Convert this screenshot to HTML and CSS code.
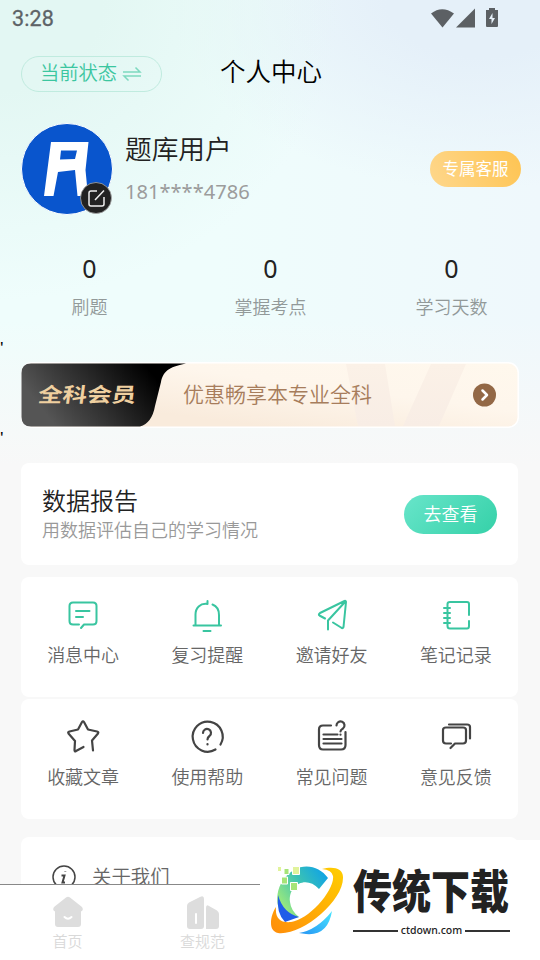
FILE: index.html
```html
<!DOCTYPE html>
<html lang="zh-CN">
<head>
<meta charset="utf-8">
<title>个人中心</title>
<link rel="stylesheet" href="styles.css">
</head>
<body>
<div class="screen">
  <div class="status">
    <span class="clock">3:28</span>
    <svg class="signals" width="70" height="22" viewBox="0 0 70 22">
      <path d="M1 5.500Q12-3 24 5.500L12.500 19.500Z"/><path d="M26 19.500L45 .5V19.500Z"/>
      <path d="M56 2h3V0h6v2h3v16q0 1-1 1H57q-1 0-1-1z"/><path class="bolt" d="M62.500 5v5H65l-3.500 6v-5H59z"/>
    </svg>
  </div>
  <header class="header">
    <button class="switch"><span>当前状态</span>
      <svg width="20" height="16" viewBox="0 0 20 16"><path d="M1 6h17l-4.500-4.500M19 10H2l4.500 4.500"/></svg>
    </button>
    <h1>个人中心</h1>
  </header>
  <section class="profile">
    <div class="avatar">
      <svg width="92" height="92" viewBox="0 0 92 92">
        <circle cx="46" cy="46" r="45.500" fill="#0955cd" stroke="#fff"/>
        <path fill="#fff" fill-rule="evenodd" d="M30 19H67.500L64.500 47 67 73H56.500L54 47 37 49 32.500 73H23ZM40 27.500 39 36.500 54 36 56 27.500Z"/>
      </svg>
      <svg class="edit" width="32" height="32" viewBox="0 0 32 32"><circle cx="16" cy="16" r="15.500"/><path d="M17 9H11q-2 0-2 2v11q0 2 2 2h11q2 0 2-2V15M15 18l9-9.500"/></svg>
    </div>
    <div class="who"><div class="name">题库用户</div><div class="phone">181****4786</div></div>
    <button class="service">专属客服</button>
  </section>
  <section class="stats">
    <div><b>0</b><span>刷题</span></div>
    <div><b>0</b><span>掌握考点</span></div>
    <div><b>0</b><span>学习天数</span></div>
  </section>
  <div class="quote">'</div>
  <section class="vip">
    <svg class="vip-bg" width="498" height="66" viewBox="0 0 498 66">
      <defs>
        <linearGradient id="dark" x1="0" y1=".6" x2="1" y2=".3"><stop offset=".08" stop-color="#555"/><stop offset=".85" stop-color="#000"/></linearGradient>
        <linearGradient id="cream" x1="0" y1="1" x2="1" y2="0"><stop offset=".25" stop-color="#f9ebdc"/><stop offset=".62" stop-color="#fef6ec"/><stop offset="1" stop-color="#fff8ed"/></linearGradient>
        <linearGradient id="band" x1="0" y1="0" x2="0" y2="1"><stop offset="0" stop-color="#fbf1e7"/><stop offset="1" stop-color="#f8ede5"/></linearGradient>
      </defs>
      <rect x=".75" y=".75" width="496.500" height="64.500" rx="10" fill="url(#cream)" stroke="#fff" stroke-width="1.500"/>
      <path d="M325 2H364L374 64H337ZM410 2H445L418 64H382Z" fill="url(#band)"/>
      <path d="M10 1.500H165C147 5 142 10 140 20L134 44Q131 61 119 64.500H10Q.5 64.500.5 55V11Q.5 1.500 10 1.500Z" fill="url(#dark)"/>
      <circle cx="463.500" cy="33" r="11.500" fill="#936846"/><path d="M461.500 28.500l4.500 4.500-4.500 4.500" fill="none" stroke="#fff" stroke-width="2.500" stroke-linecap="round" stroke-linejoin="round"/>
    </svg>
    <strong>全科会员</strong><span>优惠畅享本专业全科</span>
  </section>
  <div class="quote second">'</div>
  <section class="card report">
    <div><h2>数据报告</h2><p>用数据评估自己的学习情况</p></div>
    <button>去查看</button>
  </section>
  <section class="card grid green">
    <div><svg viewBox="0 0 36 36"><path d="M14 29.500H8q-3.500 0-3.500-3.500V11Q4.500 7.500 8 7.500H28q3.500 0 3.500 3.500V26q0 3.500-3.500 3.500H19l-3 3.500M11 16H24.500M11 22H18"/></svg><span>消息中心</span></div>
    <div><svg viewBox="0 0 36 36"><path d="M18.500 6V9C11 8 6.500 13 6.500 19.500V30M23.500 9.500Q30 12 30 20V30M4.500 30.500H32M14.500 36H21.500"/></svg><span>复习提醒</span></div>
    <div><svg viewBox="0 0 36 36"><path d="M11 23.500 5.500 20.500Q4 19.500 6 18L30.500 6Q32 5.500 32 7L29.500 32Q29 34 27 32.500L19 27.500M31 7 14 25.500V34.500"/></svg><span>邀请好友</span></div>
    <div><svg viewBox="0 0 36 36"><path d="M31 20V9Q31 7 29 7H12Q9.500 7 9.500 9V31Q9.500 33.500 12 33.500H29Q31 33.500 31 31V26M6 13h6M6 18h6M6 23h6M6 28h6"/></svg><span>笔记记录</span></div>
  </section>
  <section class="card grid dark">
    <div><svg viewBox="0 0 36 36"><path d="M18.500 29 11 33Q9.500 34 9.500 32L10 23 3.500 15.500Q2.500 14 4.500 13.500L13 11.500 17 4Q18 2.500 19 4L23 11.500 32 13.500Q34 14 33 15.500L27 22.500 28 32.500"/></svg><span>收藏文章</span></div>
    <div><svg viewBox="0 0 36 36"><path d="M26.500 31.500A15 15 0 1 1 31.500 26.500"/><path d="M14 15A4 4 0 1 1 20.500 18Q18.500 19.500 18.500 21.500M18.500 26v.4"/></svg><span>使用帮助</span></div>
    <div><svg viewBox="0 0 36 36"><path d="M17 7.500H9Q5 7.500 5 11.500V27Q5 31.500 9 31.500H27Q31.500 31.500 31.500 27V14M9.500 16.500H23.500M9.500 21H27.500M9.500 25.500H27.500M22.500 7.500A4 4 0 1 1 29 10.500Q26.500 12 26.500 13.500M26.500 16.500v.2"/></svg><span>常见问题</span></div>
    <div><svg viewBox="0 0 36 36"><path d="M13 25.500H8Q5 25.500 5 22.500V12Q5 9.500 8 9.500H25Q28 9.500 28 12V22.500Q28 25.500 25 25.500H17l-4.500 4.500M11 6.500H29Q32 6.500 32 9V20.500"/></svg><span>意见反馈</span></div>
  </section>
  <section class="card about">
    <svg width="26" height="26" viewBox="0 0 26 26"><circle cx="13" cy="13" r="11"/><path d="M10.500 11.500h3l-2 7h2.500M14.300 7.500v.4"/></svg>
    <span>关于我们</span>
  </section>
  <nav class="tabs">
    <div><svg width="34" height="34" viewBox="0 0 34 34"><path d="M15 2.500Q17 1 19 2.500L31 12Q33 15 30 16.500V29Q30 32 27 32H7Q4 32 4 29V16.500Q1 15 3 12Z"/><path class="cut" d="M13.500 22q3.500 3.500 7 0"/></svg><span>首页</span></div>
    <div><svg width="34" height="34" viewBox="0 0 34 34"><path d="M1 11Q1 8.500 3 7.500L14 2Q18 0 18 4V31Q18 34 15 34H4Q1 34 1 31ZM20 13Q20 9 23 11L31 15.500Q33 17 33 19V31Q33 34 30 34H20Z"/><path class="cut" d="M10 19v9"/></svg><span>查规范</span></div>
  </nav>
  <aside class="brand">
    <svg width="80" height="76" viewBox="0 0 80 76">
      <defs>
        <linearGradient id="arc" x1="0" y1=".7" x2="1" y2="0"><stop offset="0" stop-color="#a4ed77"/><stop offset=".5" stop-color="#3bc2b4"/><stop offset="1" stop-color="#079df0"/></linearGradient>
        <linearGradient id="ring" x1="0" y1="1" x2="1" y2="0"><stop offset="0" stop-color="#ff8d0a"/><stop offset="1" stop-color="#ffce00"/></linearGradient>
        <linearGradient id="blue" x1="0" y1="1" x2="1" y2="0"><stop offset="0" stop-color="#2594f4"/><stop offset="1" stop-color="#49e5ff"/></linearGradient>
      </defs>
      <path fill="url(#arc)" d="M18 57C4 43 7 18 26 7 38 0 52 4 60 15L51 26C38 12 20 22 22 39Q23 48 31 54Z"/>
      <path fill="#205de8" d="M10 32Q15 50 31 54L17 59Q8 50 10 32Z"/>
      <path fill="url(#blue)" d="M31 70Q49 67 64 48Q60 73 38 71Z"/>
      <path fill="url(#ring)" d="M54 6C65 3 75 5 75 14 76 38 34 73 10 70-1 68 3 51 8 44 7 55 12 60 23 59 41 57 67 27 65 13Q64 7 54 6Z"/>
      <path fill="#e1f39b" stroke="#fff" d="M9.500 3.500h4v5h-4zM24.500 3.500h7v8h-7z"/><path fill="#a6e477" stroke="#fff" d="M16 5.500h5v6h-5zM13.500 14h6v7h-6zM22.500 19.500h7v8h-7z"/>
    </svg>
    <div class="brand-copy"><strong>传统下载</strong><div class="site">ctdown.com</div></div>
  </aside>
</div>
</body>
</html>
```
FILE: styles.css
```css
* { box-sizing: border-box; }
body { margin: 0; font-family: "Noto Sans", "Noto Sans CJK SC", sans-serif; font-weight: 400; }
h1, h2, p { margin: 0; font-weight: inherit; }
button { border: 0; padding: 0; font: inherit; white-space: nowrap; }
.header, .name, .stats span, .vip, .report, .grid, .about, .tabs, .service { font-family: "Noto Sans CJK SC", sans-serif; font-weight: 350; }
.screen {
  position: relative; width: 540px; height: 960px; overflow: hidden;
  background:
    linear-gradient(180deg, rgba(248, 248, 248, 0) 320px, #f8f8f8 465px),
    radial-gradient(ellipse 340px 300px at 0 0, #e3f7f3 30%, rgba(227, 247, 243, 0)),
    radial-gradient(ellipse 310px 190px at 480px 0, #e5f0f9 30%, rgba(229, 240, 249, 0)),
    linear-gradient(90deg, #effdfc 40%, #eff8fc);
}
.status { height: 38px; display: flex; justify-content: space-between; padding: 8px 40px 0 12px; }
.clock { font: 400 21.500px/22px Roboto, sans-serif; color: #5d6366; letter-spacing: .1px; -webkit-text-stroke: .3px #5d6366; }
.signals { fill: #5c6064; }
.signals .bolt { fill: #e6f0f9; }
.header { height: 72px; display: grid; grid-template-columns: 141px 1fr 141px; padding: 18px 19px 0 21px; }
.switch { height: 36px; display: flex; align-items: center; gap: 5px; padding: 0 0 5px 18px; border: 1px solid #c0ebdf; border-radius: 18px; background: none; color: #3bc6a0; font-size: 19.300px; }
.switch svg { fill: none; stroke: #7dd9bf; stroke-width: 1.500; margin-top: 4px; }
.header h1 { font-size: 25.500px; line-height: 28px; text-align: center; color: #000; }
.profile { height: 132px; display: flex; padding: 13px 19px 0 21px; }
.avatar { position: relative; width: 92px; height: 92px; }
.edit { position: absolute; left: 59px; top: 59px; fill: #222; stroke: #aaa; stroke-width: .8; }
.edit path { fill: none; stroke: #eee; stroke-width: 1.500; }
.who { flex: 1; padding: 7px 0 0 12px; }
.name { font-size: 26.700px; line-height: 36px; color: #222; }
.phone { font-size: 20.100px; line-height: 26px; color: #9c9c9c; margin-top: 13px; }
.service { width: 91px; height: 36px; margin-top: 28px; padding-bottom: 2px; border-radius: 18px; color: #fff; font-size: 16.500px; font-weight: 400; background: linear-gradient(65deg, #fed78c, #fec452); }
.stats { width: 542px; height: 96px; margin-left: -1px; display: grid; grid-template-columns: repeat(3, 181px); padding-top: 8px; text-align: center; }
.stats b { display: block; font: 400 25px/36px "Noto Sans", sans-serif; color: #222; }
.stats span { display: block; font-size: 18px; line-height: 26px; margin-top: 7px; color: #929999; }
.quote { height: 25px; font: 500 15px/17px "Noto Sans", sans-serif; color: #000; }
.vip { position: relative; width: 498px; height: 66px; margin-left: 21px; display: flex; align-items: center; margin-top: -1px; }
.vip-bg { position: absolute; inset: 0; }
.vip strong { position: relative; width: 145px; margin-left: 17px; font-size: 24.500px; font-weight: 700; line-height: 30px; color: #efd0a0; transform: scaleY(.82) skewX(-6deg); padding-bottom: 5px; }
.vip span { position: relative; font-size: 21px; color: #a77d5c; padding-bottom: 5px; }
.quote.second { height: 35px; }
.card { width: 497px; margin-left: 21px; border-radius: 8px; background: #fff; }
.report { height: 102px; display: flex; justify-content: space-between; padding: 19px 21px 0; }
.report h2 { font-size: 24px; line-height: 35px; color: #222; }
.report p { font-size: 18px; line-height: 26px; color: #999; margin-top: -1px; }
.report button { width: 93px; height: 39px; margin-top: 13px; padding-bottom: 4px; border-radius: 20px; background: linear-gradient(135deg, #68e5ca, #35d1a8); color: #fff; font-size: 18px; }
.grid { height: 120px; display: grid; grid-template-columns: repeat(4, 1fr); text-align: center; color: #666; font-size: 18px; }
.grid > div { padding-top: 18px; }
.grid svg { display: block; width: 36px; height: 36px; margin: 0 auto; overflow: visible; fill: none; stroke: #39c5a0; stroke-width: 2; stroke-linecap: round; stroke-linejoin: round; }
.grid span { display: block; line-height: 26px; margin-top: 10px; }
.green { margin-top: 12px; }
.dark { margin-top: 2px; }
.dark svg { stroke: #444; stroke-width: 2.200; }
.dark > div { padding-top: 19px; }
.dark span { margin-top: 9px; }
.about { height: 123px; margin-top: 18px; display: flex; padding: 27px 0 0 30px; gap: 15px; color: #666; font-size: 19.400px; line-height: 24px; }
.about svg { fill: none; stroke: #444; stroke-width: 1.500; }
.about path { stroke-width: 2; }
.tabs { position: absolute; left: 0; bottom: 0; width: 540px; height: 76px; padding-top: 10px; display: grid; grid-template-columns: repeat(4, 135px); border-top: 1px solid #888; background: #fff; text-align: center; color: #d9d9d9; font-size: 15px; }
.tabs svg { display: block; margin: 0 auto; fill: #ddd; }
.tabs .cut { fill: none; stroke: #fff; stroke-width: 2; stroke-linecap: round; }
.tabs span { display: block; line-height: 22px; margin-top: 1px; }
.brand { position: absolute; right: 0; bottom: 0; width: 280px; height: 120px; display: flex; padding: 23px 0 0 8px; background: #fff; }
.brand-copy { width: 157px; margin-left: 5px; color: #222; }
.brand strong { display: block; font: 900 39px/48px "Noto Sans CJK SC", sans-serif; transform: translateY(1px) scaleY(1.180); white-space: nowrap; }
.site { display: flex; align-items: center; gap: 3px; margin-top: 11px; font: 500 10.500px/17px "Noto Sans", sans-serif; }
.site::before, .site::after { content: ""; flex: 1; height: 2px; background: #333; }
```
